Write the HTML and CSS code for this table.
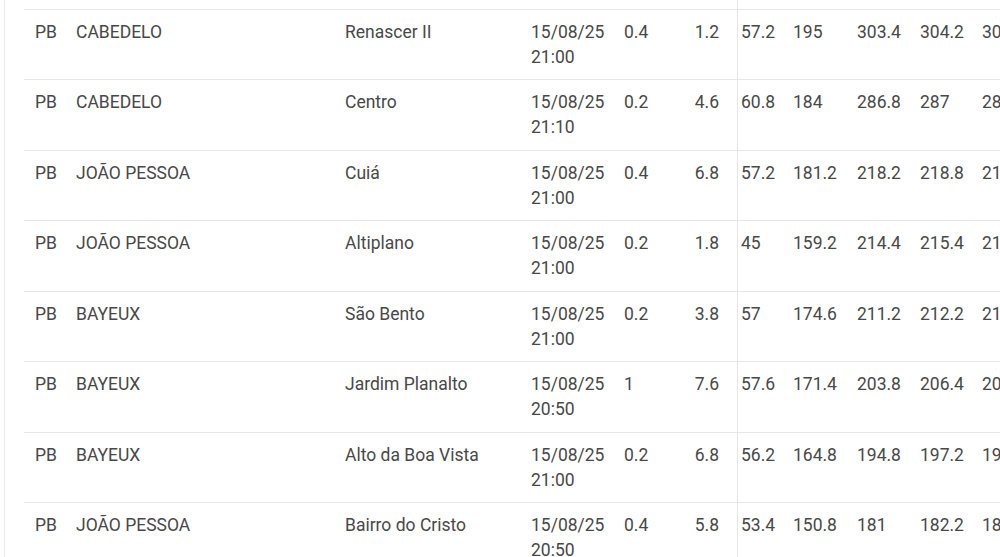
FILE: index.html
```html
<!DOCTYPE html>
<html lang="pt">
<head>
<meta charset="utf-8">
<title>Tabela</title>
<link rel="stylesheet" href="styles.css">
</head>
<body>
<div class="card">
  <div class="scroller">
    <table class="data">
      <colgroup>
        <col class="w-uf"><col class="w-city"><col class="w-hood"><col class="w-date"><col class="w-a"><col class="w-b"><col class="w-c"><col class="w-d"><col class="w-e"><col class="w-f"><col class="w-g">
      </colgroup>
      <tbody>
        <tr class="spacer" aria-hidden="true"><td></td><td></td><td></td><td></td><td></td><td></td><td class="sep"></td><td></td><td></td><td></td><td></td></tr>
        <tr><td>PB</td><td>CABEDELO</td><td>Renascer II</td><td>15/08/25 21:00</td><td>0.4</td><td class="r">1.2</td><td class="sep">57.2</td><td>195</td><td>303.4</td><td>304.2</td><td>305.0</td></tr>
        <tr><td>PB</td><td>CABEDELO</td><td>Centro</td><td>15/08/25 21:10</td><td>0.2</td><td class="r">4.6</td><td class="sep">60.8</td><td>184</td><td>286.8</td><td>287</td><td>288.2</td></tr>
        <tr><td>PB</td><td>JOÃO PESSOA</td><td>Cuiá</td><td>15/08/25 21:00</td><td>0.4</td><td class="r">6.8</td><td class="sep">57.2</td><td>181.2</td><td>218.2</td><td>218.8</td><td>219.6</td></tr>
        <tr><td>PB</td><td>JOÃO PESSOA</td><td>Altiplano</td><td>15/08/25 21:00</td><td>0.2</td><td class="r">1.8</td><td class="sep">45</td><td>159.2</td><td>214.4</td><td>215.4</td><td>216.2</td></tr>
        <tr><td>PB</td><td>BAYEUX</td><td>São Bento</td><td>15/08/25 21:00</td><td>0.2</td><td class="r">3.8</td><td class="sep">57</td><td>174.6</td><td>211.2</td><td>212.2</td><td>213.0</td></tr>
        <tr><td>PB</td><td>BAYEUX</td><td>Jardim Planalto</td><td>15/08/25 20:50</td><td>1</td><td class="r">7.6</td><td class="sep">57.6</td><td>171.4</td><td>203.8</td><td>206.4</td><td>207.8</td></tr>
        <tr><td>PB</td><td>BAYEUX</td><td>Alto da Boa Vista</td><td>15/08/25 21:00</td><td>0.2</td><td class="r">6.8</td><td class="sep">56.2</td><td>164.8</td><td>194.8</td><td>197.2</td><td>198.4</td></tr>
        <tr><td>PB</td><td>JOÃO PESSOA</td><td>Bairro do Cristo</td><td>15/08/25 20:50</td><td>0.4</td><td class="r">5.8</td><td class="sep">53.4</td><td>150.8</td><td>181</td><td>182.2</td><td>183.6</td></tr>
      </tbody>
    </table>
  </div>
</div>
</body>
</html>
```

FILE: styles.css
```css
html, body {
  margin: 0;
  padding: 0;
  background: #ffffff;
  overflow: hidden;
}

body {
  width: 1000px;
  height: 557px;
  font-family: Roboto, "Noto Sans", "Liberation Sans", sans-serif;
  color: #484848;
}

.card {
  margin-left: 4px;
  height: 557px;
  border-left: 1px solid #ececec;
  overflow: hidden;
}

.scroller {
  padding-left: 19px;
  height: 557px;
  overflow: hidden;
}

.data {
  border-collapse: separate;
  border-spacing: 0;
  table-layout: fixed;
  width: 1040px;
  font-size: 17.5px;
  line-height: 25px;
}

.w-uf { width: 41px; }
.w-city { width: 269px; }
.w-hood { width: 186px; }
.w-date { width: 93px; }
.w-a { width: 47px; }
.w-b { width: 77px; }
.w-c { width: 53px; }
.w-d { width: 64px; }
.w-e { width: 63px; }
.w-f { width: 62px; }
.w-g { width: 85px; }

.data td {
  box-sizing: border-box;
  padding: 10px 0 9.5px 11px;
  border-bottom: 1px solid #e6e6e6;
  vertical-align: top;
  text-align: left;
}

.data .spacer td {
  height: 9.5px;
  padding: 0;
  line-height: 0;
}

.data td.r {
  text-align: right;
  padding-right: 18px;
  padding-left: 0;
}

.data td.sep {
  border-left: 1px solid #e6e6e6;
}

.data td.sep,
.data td.sep ~ td {
  padding-left: 3px;
}
```
